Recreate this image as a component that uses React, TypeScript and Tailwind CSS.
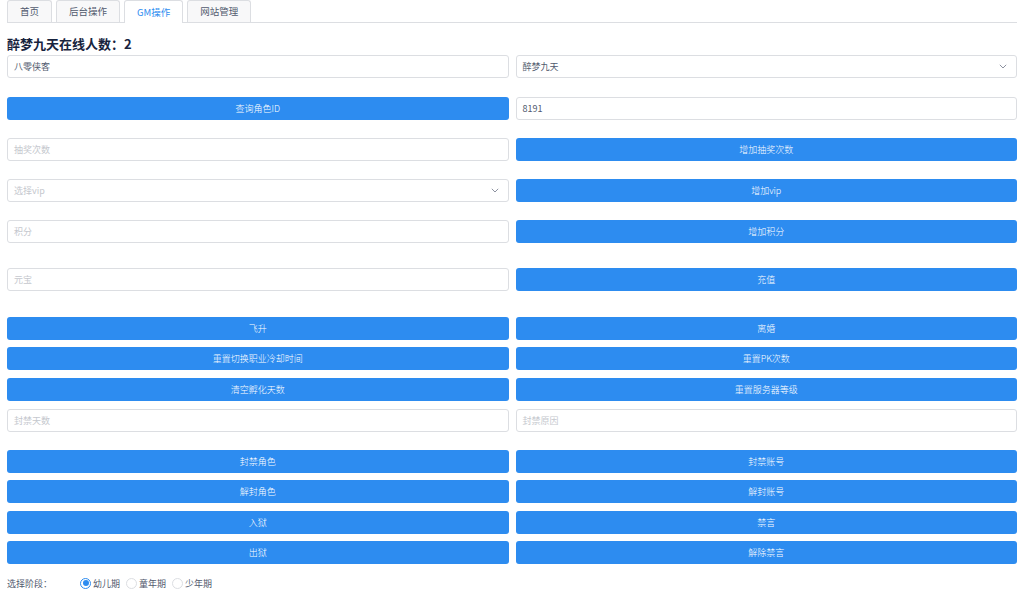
import React from "react";

const font = { fontFamily: '"Noto Sans CJK SC", "Noto Sans", sans-serif' };

function Btn({ label }: { label: string }) {
  return (
    <button className="h-[23px] w-full rounded-[3px] bg-[#2d8cf0] text-[9px] font-light leading-none text-white">
      {label}
    </button>
  );
}

function Input({ value, placeholder }: { value?: string; placeholder?: string }) {
  return (
    <div className="flex h-[23px] w-full items-center rounded-[3px] border border-[#dcdee2] bg-white px-[6px] text-[9px] leading-none">
      {value ? (
        <span className="text-[#515a6e]">{value}</span>
      ) : (
        <span className="text-[#c5c8ce]">{placeholder}</span>
      )}
    </div>
  );
}

function Select({ value, placeholder }: { value?: string; placeholder?: string }) {
  return (
    <div className="flex h-[23px] w-full items-center justify-between rounded-[3px] border border-[#dcdee2] bg-white pl-[6px] pr-[9px] text-[9px] leading-none">
      {value ? (
        <span className="text-[#515a6e]">{value}</span>
      ) : (
        <span className="text-[#c5c8ce]">{placeholder}</span>
      )}
      <svg width="8" height="5" viewBox="0 0 8 5" fill="none">
        <path d="M0.8 0.8 L4 4 L7.2 0.8" stroke="#808695" strokeWidth="0.9" />
      </svg>
    </div>
  );
}

function Row({ mt, children }: { mt: string; children: React.ReactNode }) {
  return <div className={`grid grid-cols-2 gap-x-[7px] ${mt}`}>{children}</div>;
}

function Radio({ label, checked }: { label: string; checked?: boolean }) {
  return (
    <div className="flex items-center gap-[2px]">
      <span
        className={`flex h-[11px] w-[11px] items-center justify-center rounded-full border ${
          checked ? "border-[#2d8cf0]" : "border-[#dcdee2]"
        } bg-white`}
      >
        {checked && <span className="h-[6px] w-[6px] rounded-full bg-[#2d8cf0]" />}
      </span>
      <span className="text-[9px] leading-none text-[#515a6e]">{label}</span>
    </div>
  );
}

export default function App() {
  const tabs = ["首页", "后台操作", "GM操作", "网站管理"];
  return (
    <div className="h-[593px] w-[1024px] overflow-hidden bg-white px-[7px]" style={font}>
      <div className="flex h-[23px] items-end gap-[4px] border-b border-[#dcdee2]">
        {tabs.map((t, i) =>
          i === 2 ? (
            <div
              key={t}
              className="-mb-px flex h-[23px] items-center rounded-t-[3px] border border-b-0 border-[#dcdee2] bg-white px-[12px] text-[9.5px] text-[#2d8cf0]"
            >
              {t}
            </div>
          ) : (
            <div
              key={t}
              className="flex h-[22px] items-center rounded-t-[3px] border border-b-0 border-[#dcdee2] bg-[#f8f8f9] px-[12px] text-[9.5px] text-[#515a6e]"
            >
              {t}
            </div>
          )
        )}
      </div>

      <div className="mt-[11px] h-[20px] text-[13px] font-bold leading-[20px] text-[#17233d]">
        醉梦九天在线人数：2
      </div>

      <Row mt="mt-[1px]">
        <Input value="八零侠客" />
        <Select value="醉梦九天" />
      </Row>
      <Row mt="mt-[19px]">
        <Btn label="查询角色ID" />
        <Input value="8191" />
      </Row>
      <Row mt="mt-[18px]">
        <Input placeholder="抽奖次数" />
        <Btn label="增加抽奖次数" />
      </Row>
      <Row mt="mt-[18px]">
        <Select placeholder="选择vip" />
        <Btn label="增加vip" />
      </Row>
      <Row mt="mt-[18px]">
        <Input placeholder="积分" />
        <Btn label="增加积分" />
      </Row>
      <Row mt="mt-[25px]">
        <Input placeholder="元宝" />
        <Btn label="充值" />
      </Row>
      <Row mt="mt-[26px]">
        <Btn label="飞升" />
        <Btn label="离婚" />
      </Row>
      <Row mt="mt-[7px]">
        <Btn label="重置切换职业冷却时间" />
        <Btn label="重置PK次数" />
      </Row>
      <Row mt="mt-[8px]">
        <Btn label="清空孵化天数" />
        <Btn label="重置服务器等级" />
      </Row>
      <Row mt="mt-[8px]">
        <Input placeholder="封禁天数" />
        <Input placeholder="封禁原因" />
      </Row>
      <Row mt="mt-[18px]">
        <Btn label="封禁角色" />
        <Btn label="封禁账号" />
      </Row>
      <Row mt="mt-[7px]">
        <Btn label="解封角色" />
        <Btn label="解封账号" />
      </Row>
      <Row mt="mt-[8px]">
        <Btn label="入狱" />
        <Btn label="禁言" />
      </Row>
      <Row mt="mt-[7px]">
        <Btn label="出狱" />
        <Btn label="解除禁言" />
      </Row>

      <div className="mt-[13px] flex h-[12px] items-center">
        <span className="w-[73px] text-[9px] leading-none text-[#515a6e]">选择阶段：</span>
        <div className="flex items-center gap-[6px]">
          <Radio label="幼儿期" checked />
          <Radio label="童年期" />
          <Radio label="少年期" />
        </div>
      </div>
    </div>
  );
}
